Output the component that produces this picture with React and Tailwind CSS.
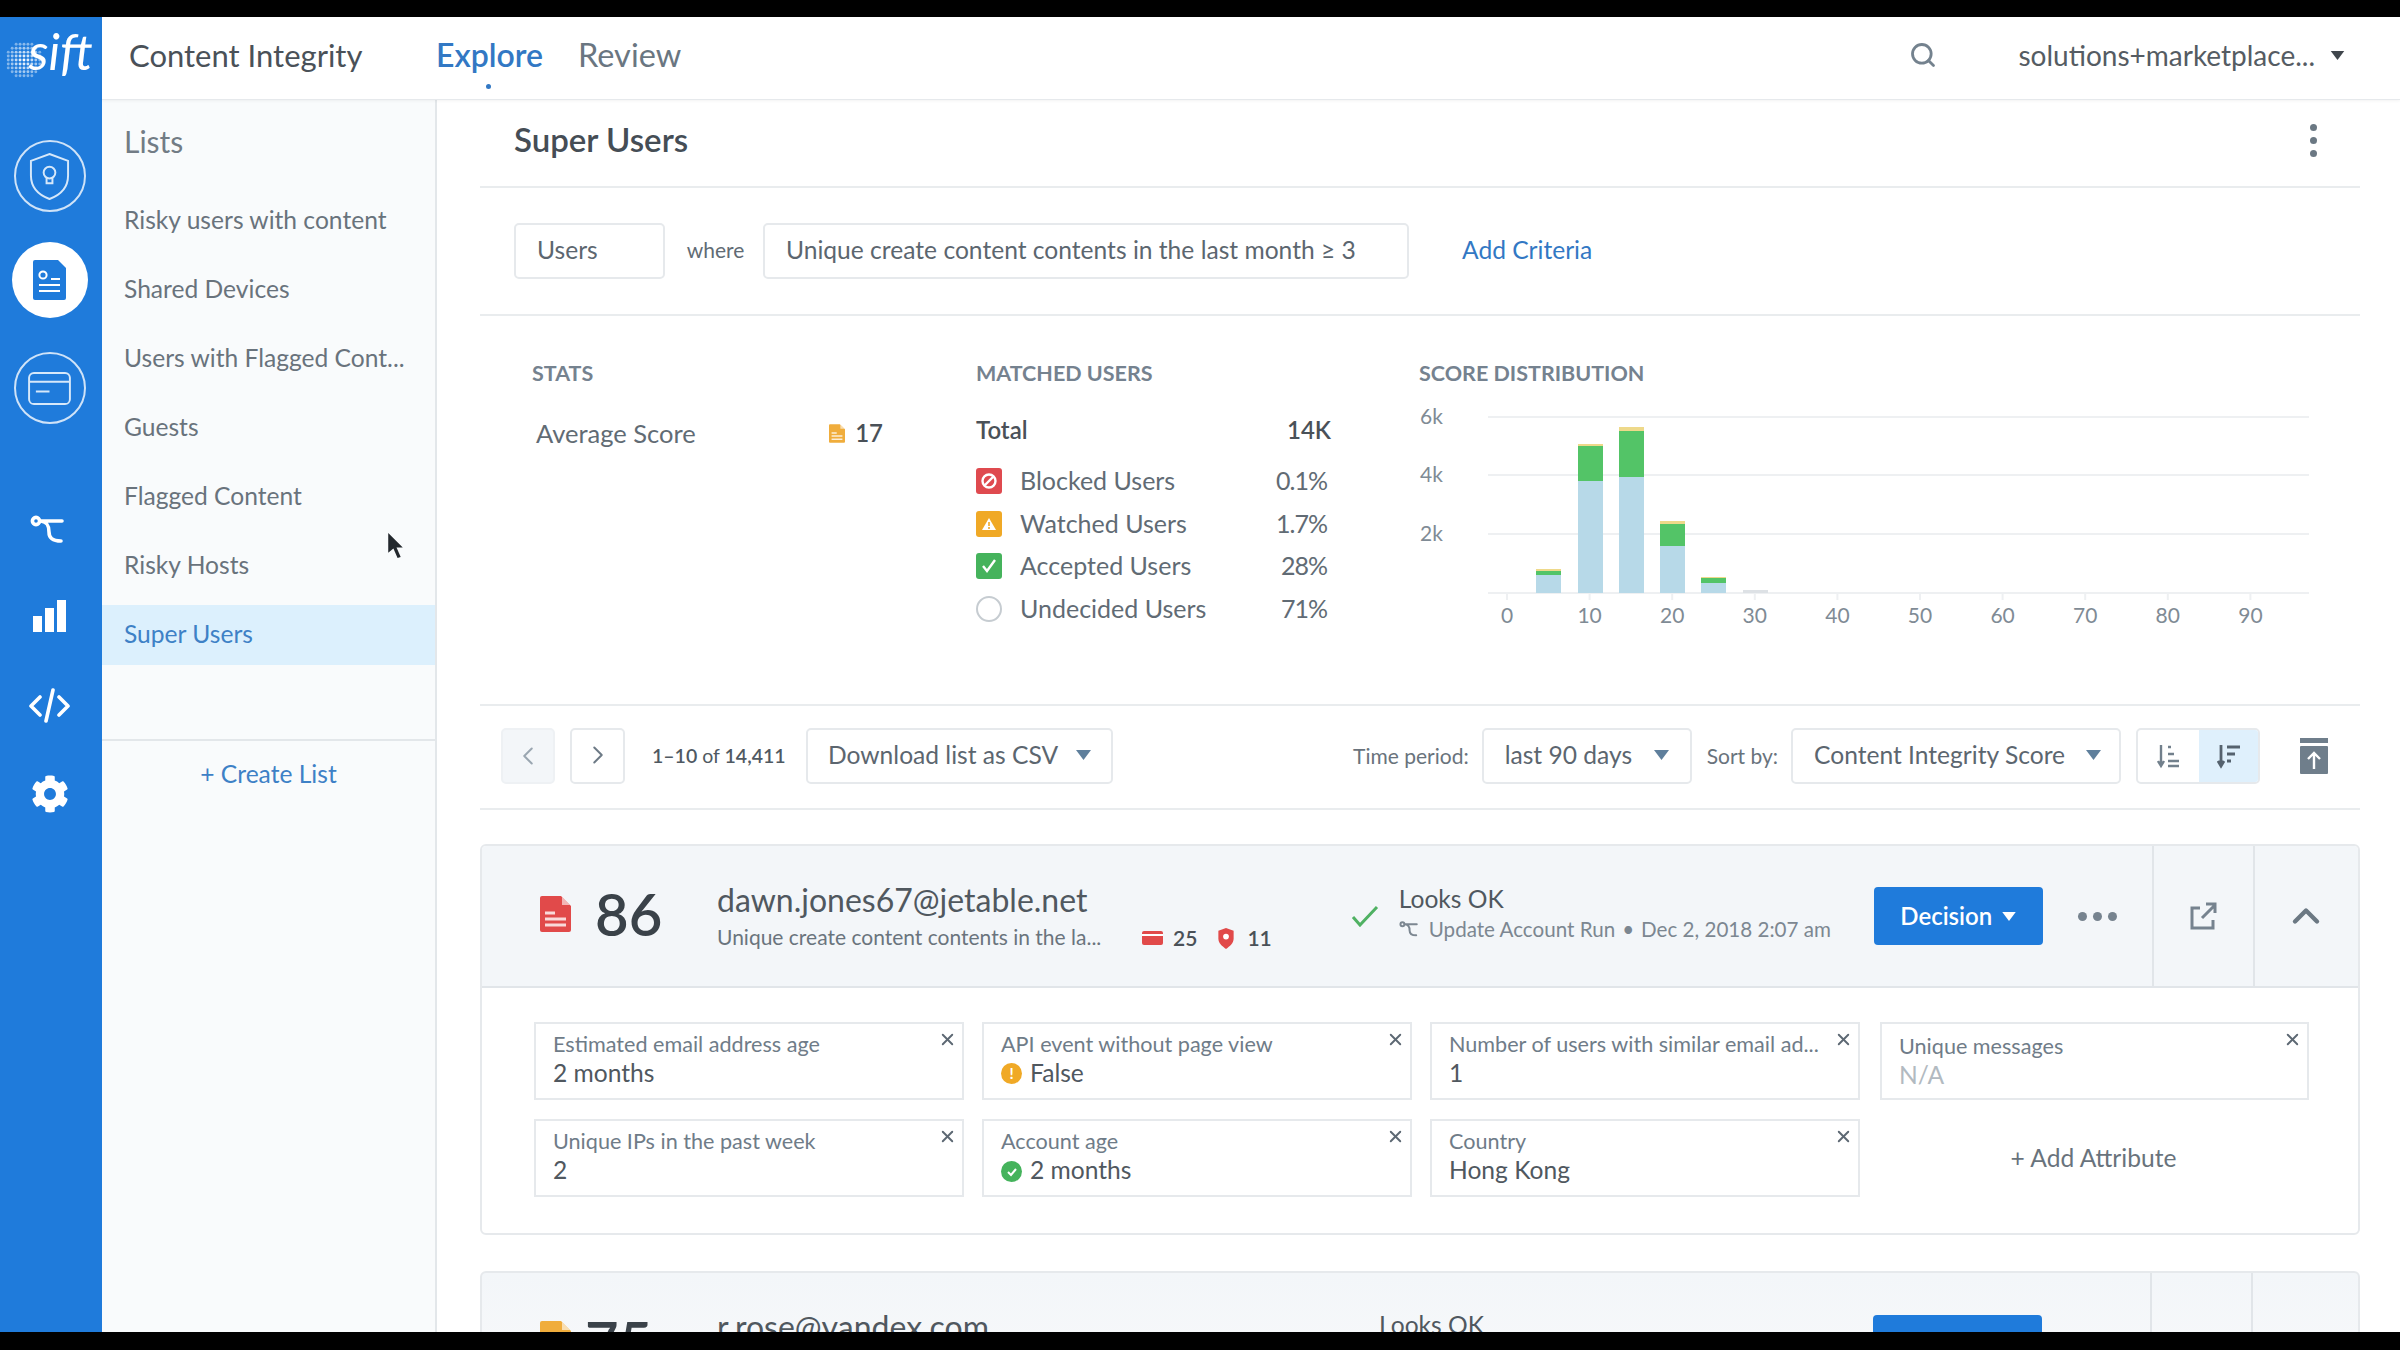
import React from "react";
import { Search, ChevronLeft, ChevronRight, ChevronUp, X } from "lucide-react";
import { FaCog } from "react-icons/fa";

const lists = [
  "Risky users with content",
  "Shared Devices",
  "Users with Flagged Cont...",
  "Guests",
  "Flagged Content",
  "Risky Hosts",
  "Super Users",
];

const matched = [
  { label: "Blocked Users", value: "0.1%", kind: "blocked" },
  { label: "Watched Users", value: "1.7%", kind: "watched" },
  { label: "Accepted Users", value: "28%", kind: "accepted" },
  { label: "Undecided Users", value: "71%", kind: "undecided" },
];

const bars = [
  { x: 1536, top: 569, green: 571, blue: 575 },
  { x: 1578, top: 444, green: 446, blue: 481 },
  { x: 1619, top: 427, green: 431, blue: 477 },
  { x: 1660, top: 521, green: 524, blue: 546 },
  { x: 1701, top: 577, green: 578, blue: 583 },
];

const Caret = ({ className = "w-[15px] h-[10px] text-[#5f7f9c]" }) => (
  <svg viewBox="0 0 15 10" className={className}>
    <path d="M0 0h15L7.5 10z" fill="currentColor" />
  </svg>
);

const DocIcon = ({ className, fill }) => (
  <svg viewBox="0 0 31 36" className={className}>
    <path d="M2 0h19l10 10v24a2 2 0 0 1-2 2H2a2 2 0 0 1-2-2V2a2 2 0 0 1 2-2z" fill={fill} />
    <path d="M22 1l8 8h-8z" fill="#fff" opacity="0.6" />
    <path d="M5 17h10M5 23h21M5 29h21" stroke="#fff" strokeWidth="3" opacity="0.8" />
  </svg>
);

const TreeIcon = ({ className }) => (
  <svg viewBox="0 0 34 29" className={className} fill="none" stroke="currentColor" strokeWidth="3.6" strokeLinecap="round">
    <circle cx="6" cy="6" r="3.6" />
    <path d="M10 6h22M11 6c6 1 8 4 8 11 0 6 3 9 12 9" />
  </svg>
);

const SideCircle = ({ size, className, children }) => (
  <div
    className={`flex items-center justify-center rounded-full border-2 border-[#cfe3f8] ${size} ${className}`}
  >
    {children}
  </div>
);

const Logo = () => {
  const dots = [];
  for (let i = 0; i < 9; i++) {
    for (let j = 0; j < 9; j++) {
      const d = Math.hypot(i - 4, j - 4);
      if (d < 5) {
        dots.push(<circle key={`${i}-${j}`} cx={2 + i * 3.5} cy={2 + j * 3.5} r="1.3" fill="#fff" opacity={1 - d * 0.13} />);
      }
    }
  }
  return (
    <div className="h-[83px] w-[102px] flex items-center pl-[7px]">
      <svg viewBox="0 0 32 32" className="w-[36px] h-[36px] mt-[2px] shrink-0">
        {dots}
      </svg>
      <span className="ml-[-13px] mt-[-15px] font-['Lato',sans-serif] italic text-[50px] leading-none text-white">
        sift
      </span>
    </div>
  );
};

const Sidebar = () => (
  <div className="w-[102px] shrink-0 bg-[#1f7bdb] flex flex-col items-center pr-[3px]">
    <Logo />
    <SideCircle size="w-[72px] h-[72px]" className="mt-[40px]">
      <svg viewBox="0 0 44 50" className="w-[43px] h-[49px]" fill="none" stroke="#d6e8fa" strokeWidth="2">
        <path d="M22 2l19 7v15c0 12-8 20-19 24C11 44 3 36 3 24V9z" />
        <circle cx="22" cy="21" r="6" />
        <path d="M19 26v6h6v-6" />
      </svg>
    </SideCircle>
    <div className="mt-[30px] w-[76px] h-[76px] rounded-full bg-white flex items-center justify-center">
      <svg viewBox="0 0 33 40" className="w-[33px] h-[40px]">
        <path d="M2 0h23l8 8v30a2 2 0 0 1-2 2H2a2 2 0 0 1-2-2V2a2 2 0 0 1 2-2z" fill="#1f7bdb" />
        <circle cx="10" cy="15" r="3.6" fill="none" stroke="#fff" strokeWidth="2" />
        <path d="M18 19h9M6 25h21M6 31h21" stroke="#fff" strokeWidth="2" />
      </svg>
    </div>
    <SideCircle size="w-[72px] h-[72px]" className="mt-[34px]">
      <svg viewBox="0 0 46 36" className="w-[45px] h-[35px]" fill="none" stroke="#d6e8fa" strokeWidth="2">
        <rect x="2" y="2" width="42" height="32" rx="5" />
        <path d="M2 11h42M9 21h14" />
      </svg>
    </SideCircle>
    <TreeIcon className="mt-[91px] ml-[-6px] w-[34px] h-[29px] text-white" />
    <svg viewBox="0 0 33 32" className="mt-[56px] w-[33px] h-[32px]" fill="#fff">
      <rect x="0" y="16" width="9" height="16" />
      <rect x="12" y="8" width="9" height="24" />
      <rect x="24" y="0" width="9" height="32" />
    </svg>
    <svg viewBox="0 0 41 35" className="mt-[56px] w-[41px] h-[35px]" fill="none" stroke="#fff" strokeWidth="3.6" strokeLinecap="round" strokeLinejoin="round">
      <path d="M11 9l-9 9 9 9M30 9l9 9-9 9M24 2l-7 31" />
    </svg>
    <FaCog className="mt-[52px] w-[38px] h-[38px] text-white" />
  </div>
);

const Header = () => (
  <div className="h-[83px] shrink-0 bg-white border-b border-[#e6e9ec] shadow-[0_1px_3px_rgba(0,0,0,0.05)] flex items-center pl-[27px] pr-[55px] pb-[6px] relative z-10">
    <div className="text-[31px] text-[#4a5158] w-[307px]">Content Integrity</div>
    <div className="relative text-[32px] font-semibold text-[#3278c4] w-[142px]">
      Explore
      <span className="absolute left-[50px] bottom-[-10px] w-[5px] h-[5px] rounded-full bg-[#3278c4]" />
    </div>
    <div className="text-[32.5px] text-[#6a7681]">Review</div>
    <Search className="ml-auto w-[28px] h-[28px] text-[#74828e]" strokeWidth={2.4} />
    <div className="ml-[81px] text-[28px] text-[#555c63] whitespace-nowrap">solutions+marketplace...</div>
    <Caret className="ml-[15px] w-[15px] h-[9px] text-[#40464c]" />
  </div>
);

const ListsPanel = () => (
  <div className="w-[335px] shrink-0 bg-[#f9fbfc] border-r-2 border-[#e3e7ea] flex flex-col">
    <div className="h-[86px] pl-[22px] pb-[3px] flex items-center text-[30px] text-[#727c85]">Lists</div>
    <div className="flex flex-col">
      {lists.map((name) => (
        <div key={name} className="h-[69px] flex items-center">
          <div
            className={
              name === "Super Users"
                ? "w-full h-[60px] flex items-center pl-[22px] text-[24.6px] text-[#3e81c6] bg-[#dcf0fd]"
                : "w-full pl-[22px] text-[24.6px] text-[#69737c] whitespace-nowrap"
            }
          >
            {name}
          </div>
        </div>
      ))}
    </div>
    <div className="mt-[70px] border-t-2 border-[#e3e7ea] pt-[15px] text-center text-[24.6px] text-[#3e81c6]">+ Create List</div>
  </div>
);

const Heading = ({ children }) => (
  <div className="h-[20px] leading-[20px] text-[21.5px] font-bold uppercase text-[#75828f] whitespace-nowrap">{children}</div>
);

const StatusIcon = ({ kind }) => {
  if (kind === "undecided") {
    return <div className="w-[26px] h-[26px] mt-[2px] rounded-full border-2 border-[#c6ccd1]" />;
  }
  const bg = kind === "blocked" ? "bg-[#df4a4f]" : kind === "watched" ? "bg-[#f0a926]" : "bg-[#45b35c]";
  return (
    <div className={`w-[26px] h-[26px] rounded-[3px] flex items-center justify-center ${bg}`}>
      <svg viewBox="0 0 20 20" className="w-[20px] h-[20px]" fill="none" stroke="#fff" strokeWidth="2.4">
        {kind === "blocked" && (
          <>
            <circle cx="10" cy="10" r="6.5" />
            <path d="M6 14l8-8" />
          </>
        )}
        {kind === "watched" && <path d="M10 4L3 16h14z" fill="#fff" stroke="none" />}
        {kind === "watched" && <path d="M10 8v4M10 13v2" stroke="#f0a926" strokeWidth="1.6" />}
        {kind === "accepted" && <path d="M4 10l4 5 8-11" />}
      </svg>
    </div>
  );
};

const Chart = () => (
  <svg viewBox="1419 400 910 240" className="w-[910px] h-[240px] mt-[17px] font-['Lato',sans-serif]">
    {[417, 475, 534, 593].map((y) => (
      <line key={y} x1="1488" x2="2309" y1={y} y2={y} stroke="#eef0f2" strokeWidth="2" />
    ))}
    {[["6k", 417], ["4k", 475], ["2k", 534]].map(([t, y]) => (
      <text key={t} x="1420" y={y + 7} fontSize="21" fill="#7f8b95">{t}</text>
    ))}
    {bars.map((b) => (
      <g key={b.x}>
        <rect x={b.x} y={b.top} width="25" height={b.green - b.top} fill="#eed98a" />
        <rect x={b.x} y={b.green} width="25" height={b.blue - b.green} fill="#53c467" />
        <rect x={b.x} y={b.blue} width="25" height={593 - b.blue} fill="#b7d9e8" />
      </g>
    ))}
    <rect x="1743" y="590" width="25" height="3" fill="#dde1e5" />
    {[0, 10, 20, 30, 40, 50, 60, 70, 80, 90].map((v, i) => (
      <g key={v}>
        <line x1={1507 + i * 82.6} x2={1507 + i * 82.6} y1="594" y2="600" stroke="#eef0f2" strokeWidth="2" />
        <text x={1507 + i * 82.6} y="623" fontSize="21" fill="#7f8b95" textAnchor="middle">{v}</text>
      </g>
    ))}
  </svg>
);

const Stats = () => (
  <div className="h-[390px] shrink-0 border-b-2 border-[#e9ecee] flex pt-[47px] pl-[52px]">
    <div className="w-[444px] shrink-0">
      <Heading>Stats</Heading>
      <div className="flex items-center mt-[31px] pl-[4px] w-[351px] text-[25.5px]">
        <span className="text-[#616b74]">Average Score</span>
        <DocIcon className="ml-auto w-[16px] h-[19px]" fill="#f0ad3c" />
        <span className="ml-[10px] text-[24px] font-semibold text-[#4a5158]">17</span>
      </div>
    </div>
    <div className="w-[355px] shrink-0">
      <Heading>Matched Users</Heading>
      <div className="flex justify-between items-center mt-[29px] text-[24px] font-semibold text-[#4a5158] pb-[12px]">
        <span>Total</span>
        <span>14K</span>
      </div>
      {matched.map((m) => (
        <div key={m.label} className="h-[42.4px] flex items-center text-[25px] text-[#616b74] pr-[4px]">
          <StatusIcon kind={m.kind} />
          <span className="ml-[18px]">{m.label}</span>
          <span className="ml-auto tracking-[-1px]">{m.value}</span>
        </div>
      ))}
    </div>
    <div className="ml-[88px]">
      <Heading>Score Distribution</Heading>
      <Chart />
    </div>
  </div>
);

const boxClass = "h-[56px] border-2 border-[#e6e9ec] rounded-[5px] bg-white flex items-center pb-[2px] text-[24.6px] text-[#5c666f]";

const Toolbar = () => (
  <div className="h-[104px] shrink-0 border-b-2 border-[#e9ecee] flex items-center pl-[21px] pr-[32px] pb-[2px] whitespace-nowrap">
    <div className="w-[54px] h-[56px] rounded-[5px] bg-[#f3f6f9] border-2 border-[#eef1f4] flex items-center justify-center">
      <ChevronLeft className="w-[30px] h-[30px] text-[#9aa6b1]" strokeWidth={1.6} />
    </div>
    <div className={`${boxClass} w-[55px] ml-[15px] justify-center`}>
      <ChevronRight className="w-[30px] h-[30px] text-[#6d7a86]" strokeWidth={1.6} />
    </div>
    <div className="ml-[27px] w-[154px] text-[19.5px] text-[#4f5962]">
      <span className="font-semibold">1–10</span> of <span className="font-semibold">14,411</span>
    </div>
    <div className={`${boxClass} w-[307px] pl-[20px]`}>
      Download list as CSV
      <Caret className="ml-[18px] w-[15px] h-[10px] text-[#5f7f9c]" />
    </div>
    <div className="ml-auto text-[21px] text-[#69737c]">Time period:</div>
    <div className={`${boxClass} w-[210px] ml-[13px] pl-[21px]`}>
      last 90 days
      <Caret className="ml-[22px] w-[15px] h-[10px] text-[#5f7f9c]" />
    </div>
    <div className="ml-[15px] text-[21px] text-[#69737c]">Sort by:</div>
    <div className={`${boxClass} w-[330px] ml-[13px] pl-[21px]`}>
      Content Integrity Score
      <Caret className="ml-[21px] w-[15px] h-[10px] text-[#5f7f9c]" />
    </div>
    <div className="ml-[15px] w-[124px] h-[56px] flex border-2 border-[#e6e9ec] rounded-[5px] overflow-hidden">
      <div className="w-[61px] flex items-center justify-center">
        <svg viewBox="0 0 24 26" className="w-[24px] h-[26px]" fill="none" stroke="#72808c" strokeWidth="2.4">
          <path d="M4 2v20M1 18l3 5 3-5M11 4h3M11 11h6M11 18h11M11 23h11" />
        </svg>
      </div>
      <div className="flex-1 bg-[#dff0fc] flex items-center justify-center">
        <svg viewBox="0 0 24 26" className="w-[24px] h-[26px]" fill="none" stroke="#55626e" strokeWidth="2.8">
          <path d="M4 2v20M1 18l3 5 3-5M10 4h13M10 11h8M10 18h4" />
        </svg>
      </div>
    </div>
    <svg viewBox="0 0 28 36" className="ml-[40px] w-[28px] h-[36px]">
      <rect x="0" y="0" width="28" height="5" fill="#6f7e8b" />
      <rect x="0" y="8" width="28" height="28" rx="1" fill="#6f7e8b" />
      <path d="M14 31V15M8 21l6-6 6 6" stroke="#fff" strokeWidth="2.4" fill="none" />
    </svg>
  </div>
);

const Tile = ({ label, value, icon, muted }) => (
  <div className="relative h-[78px] border-2 border-[#e6e9ec] pl-[17px] pt-[7px] overflow-hidden whitespace-nowrap">
    <div className={`text-[21.6px] leading-[26px] text-[#6f7c88] ${muted ? "mt-[2px]" : ""}`}>{label}</div>
    <div className={`flex items-center mt-[2px] text-[24.6px] leading-[28px] ${muted ? "text-[#b2bac1]" : "text-[#50585f]"}`}>
      {icon === "warn" && (
        <span className="w-[21px] h-[21px] mr-[8px] rounded-full bg-[#f0a926] text-white text-[15px] font-bold flex items-center justify-center">!</span>
      )}
      {icon === "ok" && (
        <span className="w-[21px] h-[21px] mr-[8px] mt-[3px] rounded-full bg-[#45b35c] flex items-center justify-center">
          <svg viewBox="0 0 14 14" className="w-[14px] h-[14px]" fill="none" stroke="#fff" strokeWidth="2">
            <path d="M3 7l3 3 5-6" />
          </svg>
        </span>
      )}
      {value}
    </div>
    <X className="absolute right-[5px] top-[6px] w-[19px] h-[19px] text-[#5d6873]" strokeWidth={2.4} />
  </div>
);

const Card = () => (
  <div className="mt-[34px] h-[391px] shrink-0 border-2 border-[#e6e9ec] rounded-[6px] overflow-hidden">
    <div className="h-[142px] bg-[#f3f6f9] border-b-2 border-[#e1e5e9] flex items-center pl-[58px] whitespace-nowrap">
      <DocIcon className="w-[31px] h-[36px] mt-[-4px]" fill="#e14a4a" />
      <div className="ml-[24px] w-[122px] mt-[-4px] text-[58px] leading-none font-semibold text-[#3a4249]">86</div>
      <div className="w-[425px] shrink-0">
        <div className="text-[32px] leading-[38px] text-[#50585f]">dawn.jones67@jetable.net</div>
        <div className="text-[21px] leading-[28px] mt-[4px] text-[#6a747d]">Unique create content contents in the la...</div>
      </div>
      <div className="flex items-center mt-[44px] text-[21px] font-semibold text-[#4a5158]">
        <svg viewBox="0 0 21 14" className="w-[21px] h-[14px]">
          <rect width="21" height="14" rx="2" fill="#e14a4a" />
          <rect y="3" width="21" height="2" fill="#fff" />
        </svg>
        <span className="ml-[10px]">25</span>
        <svg viewBox="0 0 16 22" className="ml-[21px] w-[16px] h-[21px]">
          <path d="M8 0l8 3v8c0 5-4 8-8 11-4-3-8-6-8-11V3z" fill="#e14a4a" />
          <circle cx="8" cy="9" r="3" fill="#fff" />
        </svg>
        <span className="ml-[13px]">11</span>
      </div>
      <svg viewBox="0 0 28 22" className="ml-[79px] w-[28px] h-[22px]" fill="none" stroke="#4fb163" strokeWidth="3">
        <path d="M2 12l7 8L26 2" />
      </svg>
      <div className="ml-[20px] w-[475px] shrink-0 mt-[-5px]">
        <div className="text-[24.6px] leading-[30px] text-[#50585f]">Looks OK</div>
        <div className="flex items-center mt-[1px] text-[20.6px] leading-[28px] text-[#7c8791]">
          <TreeIcon className="w-[19px] h-[16px] text-[#7c8791]" />
          <span className="ml-[11px]">Update Account Run</span>
          <span className="mx-[7px]">•</span>
          <span>Dec 2, 2018 2:07 am</span>
        </div>
      </div>
      <div className="w-[169px] h-[58px] shrink-0 rounded-[4px] bg-[#1f7bdb] flex items-center justify-center text-[24px] font-semibold text-white">
        Decision
        <Caret className="ml-[10px] w-[14px] h-[9px] text-white" />
      </div>
      <div className="ml-[35px] flex gap-[6px]">
        <span className="w-[9px] h-[9px] rounded-full bg-[#76838f]" />
        <span className="w-[9px] h-[9px] rounded-full bg-[#76838f]" />
        <span className="w-[9px] h-[9px] rounded-full bg-[#76838f]" />
      </div>
      <div className="ml-[35px] w-[101px] h-full border-l-2 border-[#e1e5e9] flex items-center justify-center">
        <svg viewBox="0 0 27 28" className="w-[27px] h-[28px]" fill="none" stroke="#76838f" strokeWidth="3">
          <path d="M10 6H2v20h21v-8M12 16L25 3M16 2h9v9" />
        </svg>
      </div>
      <div className="flex-1 h-full border-l-2 border-[#e1e5e9] flex items-center justify-center">
        <ChevronUp className="w-[44px] h-[44px] text-[#6b7883]" strokeWidth={2.4} />
      </div>
    </div>
    <div className="grid grid-cols-[430px_430px_430px_431px] gap-x-[18px] gap-y-[19px] pl-[52px] pt-[34px]">
      <Tile label="Estimated email address age" value="2 months" />
      <Tile label="API event without page view" value="False" icon="warn" />
      <Tile label="Number of users with similar email ad..." value="1" />
      <div className="ml-[2px]">
        <Tile label="Unique messages" value="N/A" muted />
      </div>
      <Tile label="Unique IPs in the past week" value="2" />
      <Tile label="Account age" value="2 months" icon="ok" />
      <Tile label="Country" value="Hong Kong" />
      <div className="flex items-center justify-center text-[24.6px] text-[#69737c]">+ Add Attribute</div>
    </div>
  </div>
);

const NextCard = () => (
  <div className="mt-[36px] h-[200px] shrink-0 border-2 border-[#e6e9ec] rounded-[6px] bg-gradient-to-b from-[#f3f6f9] to-[#fbfbfb] flex pl-[58px] whitespace-nowrap">
    <DocIcon className="w-[31px] h-[36px] mt-[48px]" fill="#f0ad3c" />
    <div className="ml-[14px] w-[132px] mt-[40px] text-[58px] leading-none font-semibold text-[#3a4249]">75</div>
    <div className="w-[662px] shrink-0 mt-[35px] text-[32px] leading-[38px] text-[#50585f]">r.rose@yandex.com</div>
    <div className="w-[494px] shrink-0 mt-[37px] text-[24.6px] leading-[30px] text-[#50585f]">Looks OK</div>
    <div className="w-[169px] h-[58px] mt-[42px] shrink-0 rounded-[4px] bg-[#1f7bdb]" />
    <div className="ml-[108px] w-[101px] h-full border-l-2 border-[#e1e5e9]" />
    <div className="flex-1 h-full border-l-2 border-[#e1e5e9]" />
  </div>
);

const Main = () => (
  <div className="flex-1 min-w-0 bg-white pl-[43px] pr-[40px] overflow-hidden flex flex-col">
    <div className="h-[88px] shrink-0 border-b-2 border-[#e9ecee] flex items-center pl-[34px] pr-[43px] pb-[6px]">
      <div className="text-[33px] font-semibold text-[#454d55]">Super Users</div>
      <div className="ml-auto flex flex-col gap-[6px]">
        <span className="w-[7px] h-[7px] rounded-full bg-[#6b7883]" />
        <span className="w-[7px] h-[7px] rounded-full bg-[#6b7883]" />
        <span className="w-[7px] h-[7px] rounded-full bg-[#6b7883]" />
      </div>
    </div>
    <div className="h-[128px] shrink-0 border-b-2 border-[#e9ecee] flex items-center pl-[34px] whitespace-nowrap">
      <div className={`${boxClass} w-[151px] pl-[21px]`}>Users</div>
      <div className="w-[98px] pl-[3px] pb-[2px] text-center text-[21px] text-[#616b74]">where</div>
      <div className={`${boxClass} w-[646px] pl-[21px]`}>Unique create content contents in the last month ≥ 3</div>
      <div className="ml-[53px] pb-[2px] text-[24.6px] text-[#3278c4]">Add Criteria</div>
    </div>
    <Stats />
    <Toolbar />
    <Card />
    <NextCard />
  </div>
);

export default function App() {
  return (
    <div className="relative w-[2400px] h-[1350px] bg-black pt-[17px] pb-[18px] overflow-hidden font-['Lato',sans-serif]">
      <div className="flex h-full">
        <Sidebar />
        <div className="flex-1 min-w-0 flex flex-col">
          <Header />
          <div className="flex flex-1 min-h-0">
            <ListsPanel />
            <Main />
          </div>
        </div>
      </div>
      {/* mouse pointer caught in the recording */}
      <svg viewBox="0 0 16 26" className="absolute left-[387px] top-[532px] w-[17px] h-[27px] z-20">
        <path d="M1 1l0 19 5-4 4 9 3-1-4-9 6 0z" fill="#23282d" />
      </svg>
    </div>
  );
}
